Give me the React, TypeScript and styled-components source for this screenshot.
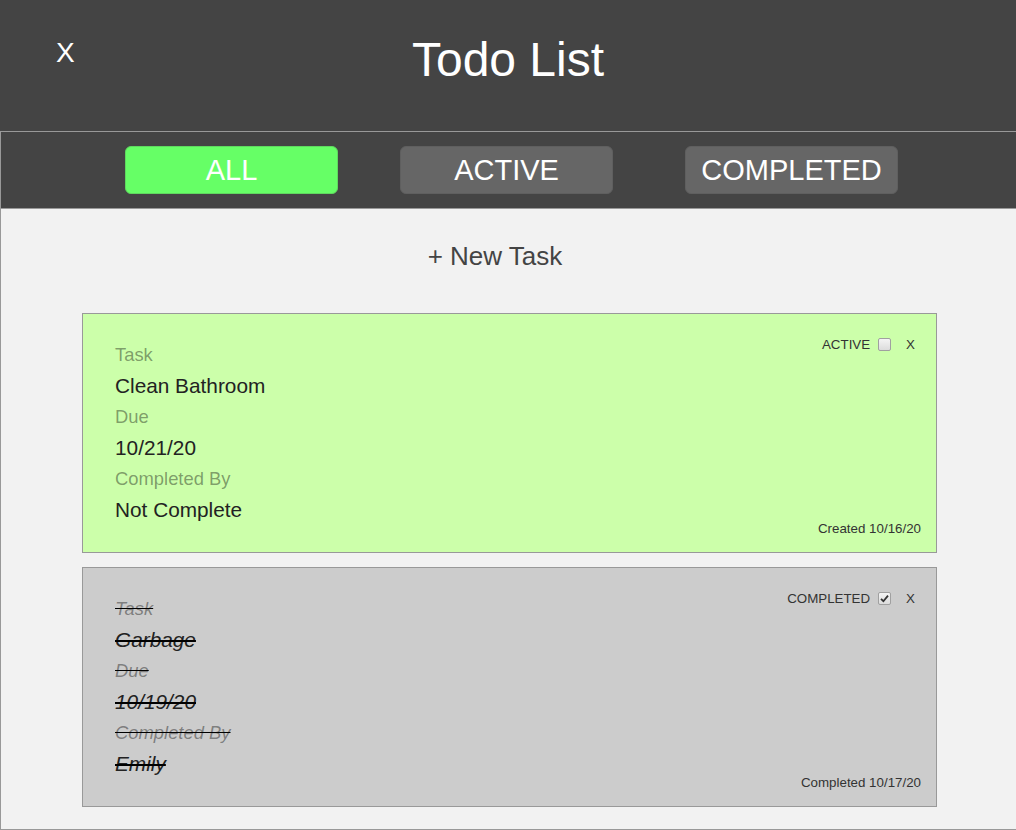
import React from "react";
import styled, { createGlobalStyle, css } from "styled-components";

const Global = createGlobalStyle`
  html, body { margin: 0; padding: 0; }
  body {
    background: #f2f2f2;
    font-family: "Liberation Sans", Arial, sans-serif;
    overflow: hidden;
  }
  * { box-sizing: border-box; }
`;

const Header = styled.header`
  height: 131px;
  background: #444;
  color: #fff;
  display: grid;
  grid-template-columns: 1fr auto 1fr;
  align-items: start;
`;

const CloseApp = styled.span`
  justify-self: start;
  margin: 37px 0 0 56px;
  font-size: 28px;
  line-height: 32px;
`;

const Title = styled.h1`
  margin: 32px 0 0;
  font-size: 48px;
  font-weight: normal;
  line-height: 55px;
`;

const Main = styled.main`
  height: 699px;
  border: 1px solid #999;
  border-right: 0;
  display: flex;
  flex-direction: column;
`;

const Nav = styled.nav`
  height: 77px;
  background: #444;
  border-bottom: 1px solid #999;
  display: flex;
  align-items: center;
  padding-left: 124px;
`;

const FilterButton = styled.button<{ $active?: boolean; $offset: number }>`
  width: 213px;
  height: 48px;
  margin-left: ${(p) => p.$offset}px;
  border-radius: 6px;
  border: 1px solid ${(p) => (p.$active ? "#5fd85f" : "#5f5f5f")};
  background: ${(p) => (p.$active ? "#6f6" : "#666")};
  color: #fff;
  font-family: "Liberation Sans", Arial, sans-serif;
  font-size: 29px;
  padding: 0;
  display: flex;
  align-items: center;
  justify-content: center;
`;

const Content = styled.section`
  flex: 1;
  background: #f2f2f2;
  display: flex;
  flex-direction: column;
`;

const NewTask = styled.div`
  margin-top: 32px;
  padding-right: 27px;
  text-align: center;
  font-size: 26px;
  line-height: 30px;
  color: #444;
`;

const CardList = styled.div`
  margin-top: 42px;
  padding: 0 79px 0 81px;
  display: flex;
  flex-direction: column;
  gap: 14px;
`;

const Card = styled.article<{ $done?: boolean }>`
  border: 1px solid #999;
  background: ${(p) => (p.$done ? "#ccc" : "#cfa")};
  padding: 21px 15px 16px 32px;
  display: flex;
  justify-content: space-between;
`;

const Fields = styled.div<{ $done?: boolean }>`
  padding: 4px 0 11px;
  display: flex;
  flex-direction: column;
  ${(p) =>
    p.$done &&
    css`
      font-style: italic;
      text-decoration: line-through;
    `}
`;

const Label = styled.div`
  height: 31px;
  line-height: 31px;
  font-size: 18.4px;
  color: rgba(0, 0, 0, 0.4);
`;

const Value = styled.div`
  height: 31px;
  line-height: 31px;
  font-size: 20.8px;
  color: #222;
`;

const Side = styled.div`
  display: flex;
  flex-direction: column;
  justify-content: space-between;
  align-items: flex-end;
  font-size: 13.33px;
  color: #333;
`;

const Controls = styled.div`
  height: 19px;
  display: flex;
  align-items: center;
`;

const Box = styled.span<{ $checked?: boolean }>`
  width: 13px;
  height: 13px;
  margin-left: 8px;
  border: 1px solid #a0a0a0;
  border-radius: 2px;
  background: linear-gradient(#f4f4f4, #dcdcdc);
  display: flex;
  align-items: center;
  justify-content: center;
`;

const Remove = styled.span`
  margin-left: 15px;
  padding-right: 6px;
`;

const Stamp = styled.div`
  line-height: 15px;
`;

function Checkbox({ checked }: { checked?: boolean }) {
  return (
    <Box $checked={checked}>
      {checked && (
        <svg width="9" height="9" viewBox="0 0 9 9">
          <path d="M1 4.8 L3.4 7.2 L8 1.6" fill="none" stroke="#333" strokeWidth="1.8" />
        </svg>
      )}
    </Box>
  );
}

type Task = {
  name: string;
  due: string;
  by: string;
  done: boolean;
  stamp: string;
};

const tasks: Task[] = [
  { name: "Clean Bathroom", due: "10/21/20", by: "Not Complete", done: false, stamp: "Created 10/16/20" },
  { name: "Garbage", due: "10/19/20", by: "Emily", done: true, stamp: "Completed 10/17/20" },
];

export default function App() {
  return (
    <>
      <Global />
      <Header>
        <CloseApp>X</CloseApp>
        <Title>Todo List</Title>
        <span />
      </Header>
      <Main>
        <Nav>
          <FilterButton $active $offset={0}>ALL</FilterButton>
          <FilterButton $offset={62}>ACTIVE</FilterButton>
          <FilterButton $offset={72}>COMPLETED</FilterButton>
        </Nav>
        <Content>
          <NewTask>+ New Task</NewTask>
          <CardList>
            {tasks.map((t) => (
              <Card key={t.name} $done={t.done}>
                <Fields $done={t.done}>
                  <Label>Task</Label>
                  <Value>{t.name}</Value>
                  <Label>Due</Label>
                  <Value>{t.due}</Value>
                  <Label>Completed By</Label>
                  <Value>{t.by}</Value>
                </Fields>
                <Side>
                  <Controls>
                    {t.done ? "COMPLETED" : "ACTIVE"}
                    <Checkbox checked={t.done} />
                    <Remove>X</Remove>
                  </Controls>
                  <Stamp>{t.stamp}</Stamp>
                </Side>
              </Card>
            ))}
          </CardList>
        </Content>
      </Main>
    </>
  );
}
